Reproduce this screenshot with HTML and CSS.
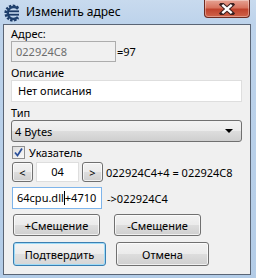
FILE: index.html
```html
<!DOCTYPE html>
<html lang="ru">
<head>
  <meta charset="UTF-8" />
  <title>Изменить адрес</title>
  <link rel="stylesheet" href="styles.css">
</head>
<body>
  <div class="window">
    <div class="titlebar">
      <svg class="app-icon" width="20" height="18" viewBox="0 0 20 18">
        <path d="M15 4.2 A7 7 0 1 0 15 13.8" fill="none" stroke="#1b3a66" stroke-width="3" stroke-dasharray="2.2 1.3"/>
        <path d="M15 4.8 A6 6 0 1 0 15 13.2" fill="none" stroke="#20426f" stroke-width="2.4"/>
        <rect x="5" y="6.4" width="11" height="1.8" fill="#1b3a66"/>
        <rect x="5" y="9.8" width="11" height="1.8" fill="#1b3a66"/>
      </svg>
      <span class="title">Изменить адрес</span>
      <div class="close">
        <svg width="16" height="12" viewBox="0 0 16 12">
          <path d="M3 1.5 L13 10.5 M13 1.5 L3 10.5" stroke="#3c2020" stroke-width="4.4" stroke-linecap="square"/>
          <path d="M3.3 1.8 L12.7 10.2 M12.7 1.8 L3.3 10.2" stroke="#ffffff" stroke-width="2.4"/>
        </svg>
      </div>
    </div>

    <div class="client">
      <div class="label first">Адрес:</div>
      <div class="row">
        <div class="field disabled addr">022924C8</div>
        <span class="text">=97</span>
      </div>

      <div class="label">Описание</div>
      <div class="field wide">Нет описания</div>

      <div class="label">Тип</div>
      <div class="combo">
        <span>4 Bytes</span>
        <span class="arrow"></span>
      </div>

      <div class="check-row">
        <span class="checkbox">
          <svg width="11" height="11" viewBox="0 0 11 11"><path d="M2 5.5 L4.5 8.5 L9 1.5" fill="none" stroke="#2a4f9a" stroke-width="1.8"/></svg>
        </span>
        <span>Указатель</span>
      </div>

      <div class="row ptr-row">
        <button class="btn small">&lt;</button>
        <div class="field offset">04</div>
        <button class="btn small">&gt;</button>
        <span class="text">022924C4+4 = 022924C8</span>
      </div>

      <div class="row base-row">
        <div class="field focus base">64cpu.dll<span class="caret"></span>+4710</div>
        <span class="text">-&gt;022924C4</span>
      </div>

      <div class="row btn-row">
        <button class="btn mid">+Смещение</button>
        <button class="btn mid second">-Смещение</button>
      </div>

      <div class="row btn-row last">
        <button class="btn big default">Подтвердить</button>
        <button class="btn big second2">Отмена</button>
      </div>
    </div>
  </div>
</body>
</html>
```

FILE: styles.css
```css
* {
  margin: 0;
  padding: 0;
  box-sizing: border-box;
}

body {
  font-family: 'Noto Sans', 'Open Sans', sans-serif;
  font-size: 11px;
  color: #000;
  background: #b9d1ea;
}

.window {
  width: 256px;
  height: 278px;
  background: linear-gradient(to bottom, #c8daee 0, #bdd3eb 24px, #b3cce7 100%);
  overflow: hidden;
}

.titlebar {
  height: 24px;
  display: flex;
  align-items: flex-start;
  padding-left: 3px;
}

.app-icon {
  margin-top: 4px;
}

.title {
  margin-left: 3px;
  margin-top: 3px;
  font-size: 12px;
  line-height: 17px;
}

.close {
  margin-left: auto;
  margin-right: 6px;
  width: 46px;
  height: 18px;
  border: 1px solid #6d2a20;
  border-top: none;
  border-radius: 0 0 4px 4px;
  background: linear-gradient(to bottom, #e6a394 0, #d8745f 45%, #c0432d 55%, #d0634a 100%);
  box-shadow: inset 0 0 0 1px rgba(255, 255, 255, 0.35);
  display: flex;
  align-items: center;
  justify-content: center;
}

.client {
  margin-left: 3px;
  width: 248px;
  height: 251px;
  background: #f0f0f0;
  border: 1px solid #5a6575;
  padding: 0 8px 0 7px;
}

.label {
  line-height: 15px;
  height: 15px;
  margin-top: 3px;
}

.label.first {
  margin-top: 1px;
}

.row {
  display: flex;
  align-items: center;
}

.text {
  white-space: nowrap;
}

.field {
  height: 22px;
  line-height: 20px;
  border: 1px solid #dedede;
  background: #fff;
  padding: 0 6px;
  white-space: nowrap;
}

.field.disabled {
  background: #f0f0f0;
  border-color: #adadad;
  color: #6d6d6d;
  height: 21px;
  line-height: 19px;
  padding-left: 4px;
}

.addr {
  width: 105px;
  margin-right: 1px;
}

.wide {
  width: 231px;
  padding-left: 6px;
}

.combo {
  width: 231px;
  height: 22px;
  border: 1px solid #707070;
  border-radius: 3px;
  background: linear-gradient(to bottom, #f2f2f2 0, #ebebeb 50%, #dddddd 51%, #cfcfcf 100%);
  display: flex;
  align-items: center;
  padding: 0 8px 0 3px;
}

.arrow {
  margin-left: auto;
  width: 0;
  height: 0;
  border-left: 4px solid transparent;
  border-right: 4px solid transparent;
  border-top: 4px solid #000;
}

.check-row {
  display: flex;
  align-items: center;
  height: 15px;
  margin-top: 3px;
  padding-left: 1px;
}

.checkbox {
  width: 13px;
  height: 13px;
  border: 1px solid #8f8f8f;
  background: linear-gradient(135deg, #dcdcdc, #fafafa);
  margin-right: 4px;
  display: flex;
  align-items: center;
  justify-content: center;
}

.btn {
  font-family: inherit;
  font-size: 11px;
  color: #000;
  border: 1px solid #707070;
  border-radius: 3px;
  background: linear-gradient(to bottom, #f2f2f2 0, #ebebeb 50%, #dddddd 51%, #cfcfcf 100%);
  box-shadow: inset 0 0 0 1px rgba(255, 255, 255, 0.7);
}

.ptr-row {
  margin-top: 2px;
  height: 20px;
  padding-left: 1px;
}

.btn.small {
  width: 21px;
  height: 20px;
}

.offset {
  width: 43px;
  height: 20px;
  line-height: 18px;
  margin: 0 3px;
  text-align: center;
  padding: 0;
}

.ptr-row .text {
  margin-left: 3px;
}

.base-row {
  margin-top: 5px;
  padding-left: 1px;
}

.base {
  width: 90px;
  border-color: #7eb4ea;
  padding-left: 4px;
}

.caret {
  display: inline-block;
  width: 1px;
  height: 14px;
  background: #000;
  vertical-align: -3px;
}

.base-row .text {
  margin-left: 5px;
}

.btn-row {
  margin-top: 5px;
  padding-left: 2px;
}

.btn.mid {
  width: 87px;
  height: 22px;
}

.btn.mid.second {
  margin-left: 14px;
}

.btn-row.last {
  margin-top: 6px;
}

.btn.big {
  width: 93px;
  height: 24px;
}

.btn.default {
  border-color: #3c7fb1;
  box-shadow: inset 0 0 0 1px #9fdcf8;
  background: linear-gradient(to bottom, #f4f4f4 0, #ececec 50%, #e0e0e0 51%, #d6d6d6 100%);
}

.btn.second2 {
  margin-left: 10px;
}
```
